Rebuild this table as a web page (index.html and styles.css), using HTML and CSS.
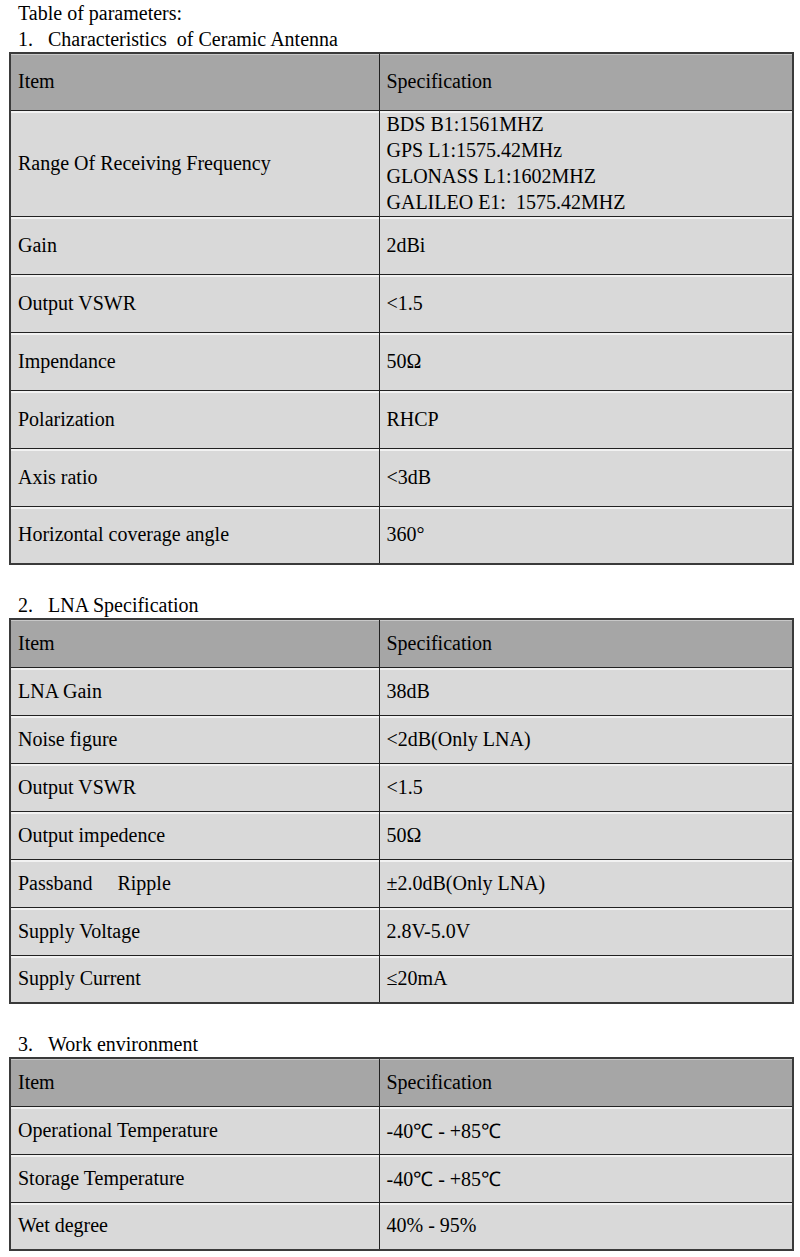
FILE: index.html
```html
<!DOCTYPE html>
<html>
<head>
<meta charset="utf-8">
<link rel="stylesheet" href="styles.css">
</head>
<body>
<div class="page">
  <p class="line">Table of parameters:</p>
  <p class="line"><span class="num">1.</span>Characteristics&nbsp; of Ceramic Antenna</p>
  <table class="spec">
    <colgroup><col class="c1"><col class="c2"></colgroup>
    <tr class="head h57"><td>Item</td><td>Specification</td></tr>
    <tr class="h106"><td>Range Of Receiving Frequency</td><td class="multi">BDS B1:1561MHZ<br>GPS L1:1575.42MHz<br>GLONASS L1:1602MHZ<br>GALILEO E1:&nbsp; 1575.42MHZ</td></tr>
    <tr class="h58"><td>Gain</td><td>2dBi</td></tr>
    <tr class="h58"><td>Output VSWR</td><td>&lt;1.5</td></tr>
    <tr class="h58"><td>Impendance</td><td>50Ω</td></tr>
    <tr class="h58"><td>Polarization</td><td>RHCP</td></tr>
    <tr class="h58"><td>Axis ratio</td><td>&lt;3dB</td></tr>
    <tr class="h58"><td>Horizontal coverage angle</td><td>360°</td></tr>
  </table>

  <p class="line sec"><span class="num">2.</span>LNA Specification</p>
  <table class="spec">
    <colgroup><col class="c1"><col class="c2"></colgroup>
    <tr class="head h48"><td>Item</td><td>Specification</td></tr>
    <tr class="h48"><td>LNA Gain</td><td>38dB</td></tr>
    <tr class="h48"><td>Noise figure</td><td>&lt;2dB(Only LNA)</td></tr>
    <tr class="h48"><td>Output VSWR</td><td>&lt;1.5</td></tr>
    <tr class="h48"><td>Output impedence</td><td>50Ω</td></tr>
    <tr class="h48"><td>Passband&nbsp;&nbsp;&nbsp;&nbsp; Ripple</td><td>±2.0dB(Only LNA)</td></tr>
    <tr class="h48"><td>Supply Voltage</td><td>2.8V-5.0V</td></tr>
    <tr class="h48"><td>Supply Current</td><td>≤20mA</td></tr>
  </table>

  <p class="line sec"><span class="num">3.</span>Work environment</p>
  <table class="spec">
    <colgroup><col class="c1"><col class="c2"></colgroup>
    <tr class="head h48"><td>Item</td><td>Specification</td></tr>
    <tr class="h48"><td>Operational Temperature</td><td>-40℃ - +85℃</td></tr>
    <tr class="h48"><td>Storage Temperature</td><td>-40℃ - +85℃</td></tr>
    <tr class="h48"><td>Wet degree</td><td>40% - 95%</td></tr>
  </table>
</div>
</body>
</html>
```

FILE: styles.css
```css
html, body {
  margin: 0;
  padding: 0;
  background: #ffffff;
}

.page {
  padding: 0 0 0 9px;
  font-family: "Liberation Serif", "Times New Roman", "DejaVu Serif", serif;
  font-size: 20px;
  color: #000000;
}

.line {
  margin: 0;
  padding-left: 9px;
  height: 26px;
  line-height: 26px;
  white-space: pre;
}

.line.sec {
  margin-top: 27px;
}

.num {
  display: inline-block;
  width: 30px;
}

.spec {
  border-collapse: collapse;
  width: 783px;
  table-layout: fixed;
  border: 2px solid #3a3a3a;
  font-family: "Liberation Serif", "Times New Roman", serif;
  font-size: 20px;
}

.c1 { width: 369px; }
.c2 { width: 414px; }

.spec td {
  border: 1px solid #222222;
  background: #d9d9d9;
  padding: 0 7px;
  vertical-align: middle;
  box-shadow: inset 0 2px 0 #f2f2f2;
  white-space: pre;
}

.spec tr.head td {
  background: #a6a6a6;
  box-shadow: inset 0 1px 0 #c8c8c8;
}

.spec td.multi {
  line-height: 26px;
}

.h57 { height: 57px; }
.h106 { height: 106px; }
.h58 { height: 58px; }
.h48 { height: 48px; }
```
